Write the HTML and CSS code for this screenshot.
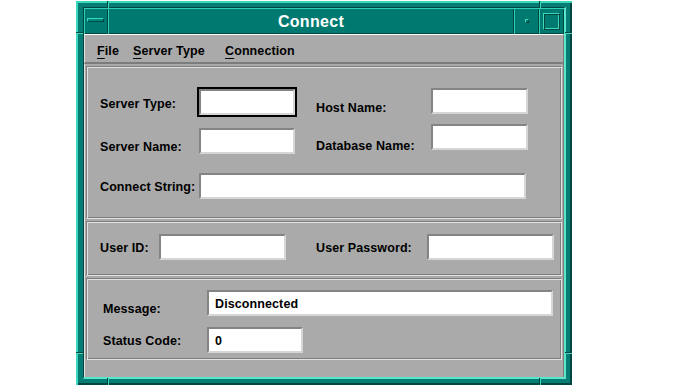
FILE: index.html
```html
<!DOCTYPE html>
<html lang="en">
<head>
    <meta charset="UTF-8">
    <meta name="viewport" content="width=device-width, initial-scale=1.0">
    <title>Connect</title>
    <link rel="stylesheet" href="styles.css">
</head>
<body>
    <div class="window">
        <!-- resize handle notches on the frame -->
        <span class="notch notch-v notch-tl"></span>
        <span class="notch notch-v notch-tr"></span>
        <span class="notch notch-v notch-bl"></span>
        <span class="notch notch-v notch-br"></span>
        <span class="notch notch-h notch-lt"></span>
        <span class="notch notch-h notch-lb"></span>
        <span class="notch notch-h notch-rt"></span>
        <span class="notch notch-h notch-rb"></span>

        <div class="frame">
            <div class="titlebar">
                <div class="title-btn menu-btn"><span class="menu-bar"></span></div>
                <div class="title">Connect</div>
                <div class="title-btn min-btn"><span class="min-dot"></span></div>
                <div class="title-btn max-btn"><span class="max-box"></span></div>
            </div>

            <div class="client">
                <div class="menubar">
                    <span class="menu-item item-file"><u>F</u>ile</span>
                    <span class="menu-item item-type"><u>S</u>erver Type</span>
                    <span class="menu-item"><u>C</u>onnection</span>
                </div>

                <div class="panel panel-server">
                    <div class="panel-cols">
                        <div class="col col-left">
                            <div class="row">
                                <span class="lbl lbl-left lbl-server-type">Server Type:</span>
                                <div class="field field-short focused"></div>
                            </div>
                            <div class="row row-server-name">
                                <span class="lbl lbl-left lbl-server-name">Server Name:</span>
                                <div class="field field-short"></div>
                            </div>
                        </div>
                        <div class="col col-right">
                            <div class="row">
                                <span class="lbl lbl-right lbl-host">Host Name:</span>
                                <div class="field field-host"></div>
                            </div>
                            <div class="row row-database">
                                <span class="lbl lbl-right lbl-database">Database Name:</span>
                                <div class="field field-host"></div>
                            </div>
                        </div>
                    </div>
                    <div class="row row-center row-connect">
                        <span class="lbl lbl-left">Connect String:</span>
                        <div class="field field-connect"></div>
                    </div>
                </div>

                <div class="panel panel-user">
                    <div class="row row-center">
                        <span class="lbl lbl-user">User ID:</span>
                        <div class="field field-user"></div>
                        <span class="lbl lbl-password">User Password:</span>
                        <div class="field field-user"></div>
                    </div>
                </div>

                <div class="panel panel-status">
                    <div class="row">
                        <span class="lbl lbl-status lbl-message">Message:</span>
                        <div class="field field-message">Disconnected</div>
                    </div>
                    <div class="row row-center row-code">
                        <span class="lbl lbl-status">Status Code:</span>
                        <div class="field field-short">0</div>
                    </div>
                </div>
            </div>
        </div>
    </div>
</body>
</html>
```

FILE: styles.css
```css
* {
    margin: 0;
    padding: 0;
    box-sizing: border-box;
}

body {
    background-color: #ffffff;
    font-family: "Liberation Sans", Arial, sans-serif;
    font-weight: bold;
    font-size: 12.5px;
    color: #000000;
}

/* window manager frame */
.window {
    position: relative;
    width: 496px;
    height: 384px;
    margin: 1px 0 0 76px;
    padding: 6px 6px 6px 7px;
    background-color: #067d74;
    box-shadow: inset 2px 2px 0 #3ad8bc, inset -2px -2px 0 #02463f;
}

.notch {
    position: absolute;
}

.notch-v {
    width: 2px;
    height: 7px;
    border-left: 1px solid #02463f;
    border-right: 1px solid #3ad8bc;
}

.notch-h {
    width: 7px;
    height: 2px;
    border-top: 1px solid #02463f;
    border-bottom: 1px solid #3ad8bc;
}

.notch-tl { left: 31px; top: 0; }
.notch-tr { left: 463px; top: 0; }
.notch-bl { left: 31px; bottom: 0; }
.notch-br { left: 463px; bottom: 0; }
.notch-lt { left: 0; top: 31px; }
.notch-lb { left: 0; top: 351px; }
.notch-rt { right: 0; top: 31px; }
.notch-rb { right: 0; top: 351px; }

.frame {
    height: 100%;
    border-style: solid;
    border-width: 1px 2px 2px 1px;
    border-color: #02463f #5ae6cc #5ae6cc #02463f;
    display: flex;
    flex-direction: column;
}

/* title bar */
.titlebar {
    height: 26px;
    display: flex;
    background-color: #007a70;
}

.title-btn,
.title {
    box-shadow: inset 1px 1px 0 #2fcfb3, inset -1px -1px 0 #02463f;
    display: flex;
    align-items: center;
    justify-content: center;
}

.menu-btn {
    width: 24px;
    justify-content: flex-start;
    padding-left: 3px;
}

.menu-bar {
    width: 17px;
    height: 4px;
    margin-top: -2px;
    background-color: #008a7e;
    border-top: 1px solid #3ad8bc;
    border-left: 1px solid #3ad8bc;
    border-bottom: 1px solid #02463f;
    border-right: 1px solid #02463f;
}

.title {
    flex: 1;
    padding-top: 2px;
    color: #ffffff;
    font-size: 16px;
    letter-spacing: 0.3px;
}

.min-btn {
    width: 25px;
}

.min-dot {
    width: 4px;
    height: 4px;
    border-top: 1px solid #3ad8bc;
    border-left: 1px solid #3ad8bc;
    border-bottom: 1px solid #02463f;
    border-right: 1px solid #02463f;
}

.max-btn {
    width: 25px;
}

.max-box {
    width: 17px;
    height: 17px;
    border-top: 1px solid #3ad8bc;
    border-left: 1px solid #3ad8bc;
    border-bottom: 1px solid #02463f;
    border-right: 1px solid #02463f;
    box-shadow: inset 1px 1px 0 #02463f, inset -1px -1px 0 #3ad8bc;
}

/* application area */
.client {
    flex: 1;
    background-color: #aaaaaa;
    box-shadow: inset 1px 0 0 #e2e2e2, inset -1px 0 0 #7c7c7c;
}

.menubar {
    height: 30px;
    display: flex;
    align-items: center;
    padding: 4px 0 0 12px;
    border-top: 1px solid #ffffff;
    border-bottom: 2px solid #7c7c7c;
    border-left: 1px solid #e2e2e2;
    border-right: 1px solid #7c7c7c;
    letter-spacing: 0.1px;
}

.menu-item u {
    text-underline-offset: 3px;
}

.item-file {
    width: 36px;
}

.item-type {
    width: 92px;
}

/* etched frames */
.panel {
    margin: 2px 2px 0 2px;
    border: 1px solid;
    border-color: #7c7c7c #e2e2e2 #e2e2e2 #7c7c7c;
    box-shadow: inset 1px 1px 0 #e2e2e2, inset -1px -1px 0 #7c7c7c;
    padding: 1px;
}

.panel-server {
    padding: 19px 1px 17px 13px;
}

.panel-user {
    padding: 10px 1px 13px 13px;
}

.panel-status {
    padding: 9px 1px 4px 16px;
}

.panel-cols {
    display: flex;
}

.col-left {
    padding-top: 1px;
}

.col-right {
    margin-left: 19px;
}

.row {
    display: flex;
    align-items: flex-start;
}

.row-center {
    align-items: center;
}

.row-server-name {
    margin-top: 9px;
}

.row-database {
    margin-top: 6px;
}

.row-connect {
    margin-top: 15px;
}

.row-code {
    margin-top: 7px;
}

.lbl {
    padding-top: 3px;
    line-height: 15px;
    white-space: nowrap;
    letter-spacing: 0.1px;
}

.lbl-left { width: 97px; }
.lbl-right { width: 113px; }
.lbl-user { width: 57px; }
.lbl-password { width: 109px; margin-left: 28px; }
.lbl-status { width: 102px; }

.lbl-server-type { margin-top: 7px; }
.lbl-server-name { margin-top: 11px; }
.lbl-host { margin-top: 12px; }
.lbl-database { margin-top: 14px; }
.lbl-message { margin-top: 11px; }

/* text fields */
.field {
    height: 26px;
    margin: 2px;
    background-color: #ffffff;
    border: 2px solid;
    border-color: #848484 #d6d6d6 #d6d6d6 #848484;
    padding: 3px 0 0 6px;
    line-height: 19px;
    letter-spacing: 0.1px;
}

.field.focused {
    box-shadow: 0 0 0 2px #000000;
}

.field-short { width: 96px; }
.field-host { width: 97px; }
.field-connect { width: 327px; }
.field-user { width: 127px; }
.field-message { width: 346px; }
```
